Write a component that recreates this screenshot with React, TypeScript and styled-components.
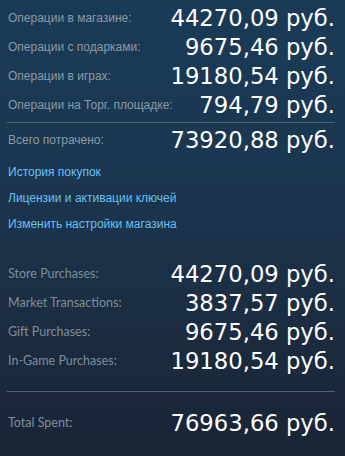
import React from "react";
import styled, { createGlobalStyle } from "styled-components";

type Lang = "ru" | "en";

const GlobalStyle = createGlobalStyle`
  html, body {
    margin: 0;
    padding: 0;
  }
  body {
    background: #1a2434;
  }
`;

const storeRows = [
  { label: "Операции в магазине:", amount: "44270,09 руб." },
  { label: "Операции с подарками:", amount: "9675,46 руб." },
  { label: "Операции в играх:", amount: "19180,54 руб." },
  { label: "Операции на Торг. площадке:", amount: "794,79 руб." },
];

const links = ["История покупок", "Лицензии и активации ключей", "Изменить настройки магазина"];

const summaryRows = [
  { label: "Store Purchases:", amount: "44270,09 руб." },
  { label: "Market Transactions:", amount: "3837,57 руб." },
  { label: "Gift Purchases:", amount: "9675,46 руб." },
  { label: "In-Game Purchases:", amount: "19180,54 руб." },
];

const App: React.FC = () => {
  return (
    <Page>
      <GlobalStyle />
      <Section>
        {storeRows.map((row) => (
          <Row key={row.label}>
            <Label lang="ru">{row.label}</Label>
            <Amount>{row.amount}</Amount>
          </Row>
        ))}
      </Section>
      <Divider $gap={3} />
      <Row $top={2}>
        <Label lang="ru">Всего потрачено:</Label>
        <Amount>73920,88 руб.</Amount>
      </Row>

      <Links>
        {links.map((text) => (
          <LinkItem key={text} href="#">
            {text}
          </LinkItem>
        ))}
      </Links>

      {/* английская сводка */}
      <Section $top={22}>
        {summaryRows.map((row) => (
          <Row key={row.label}>
            <Label lang="en">{row.label}</Label>
            <Amount>{row.amount}</Amount>
          </Row>
        ))}
      </Section>
      <Divider $gap={16} />
      <Row $top={16}>
        <Label lang="en">Total Spent:</Label>
        <Amount>76963,66 руб.</Amount>
      </Row>
    </Page>
  );
};

const Page = styled.div`
  box-sizing: border-box;
  min-height: 456px;
  padding: 3px 10px 0 7px;
  background: linear-gradient(180deg, #193b57 0%, #1b3751 35%, #1b2d42 70%, #1a2434 100%);
`;

const Section = styled.div<{ $top?: number }>`
  display: flex;
  flex-direction: column;
  margin-top: ${({ $top }) => $top ?? 0}px;
`;

const Row = styled.div<{ $top?: number }>`
  display: flex;
  justify-content: space-between;
  align-items: center;
  height: 29px;
  padding-left: 1px;
  margin-top: ${({ $top }) => $top ?? 0}px;
`;

const Label = styled.span<{ lang: Lang }>`
  ${({ lang }) =>
    lang === "ru"
      ? `
    font-family: "Liberation Sans", Arial, sans-serif;
    font-size: 12px;
    color: #8c99a6;
  `
      : `
    font-family: Lato, "Open Sans", sans-serif;
    font-size: 12.5px;
    color: #7f8d9a;
  `}
`;

const Amount = styled.span`
  font-family: "DejaVu Sans", Verdana, sans-serif;
  font-size: 22.7px;
  line-height: 29px;
  color: #ffffff;
  padding-top: 2px;
`;

const Divider = styled.div<{ $gap: number }>`
  height: 1px;
  margin-top: ${({ $gap }) => $gap}px;
  background: #4d6275;
`;

const Links = styled.div`
  display: flex;
  flex-direction: column;
  margin-top: 5px;
  padding-left: 1px;
`;

const LinkItem = styled.a`
  font-family: "Liberation Sans", Arial, sans-serif;
  font-size: 12px;
  line-height: 26px;
  color: #66c0f4;
  text-decoration: none;
`;

export default App;
